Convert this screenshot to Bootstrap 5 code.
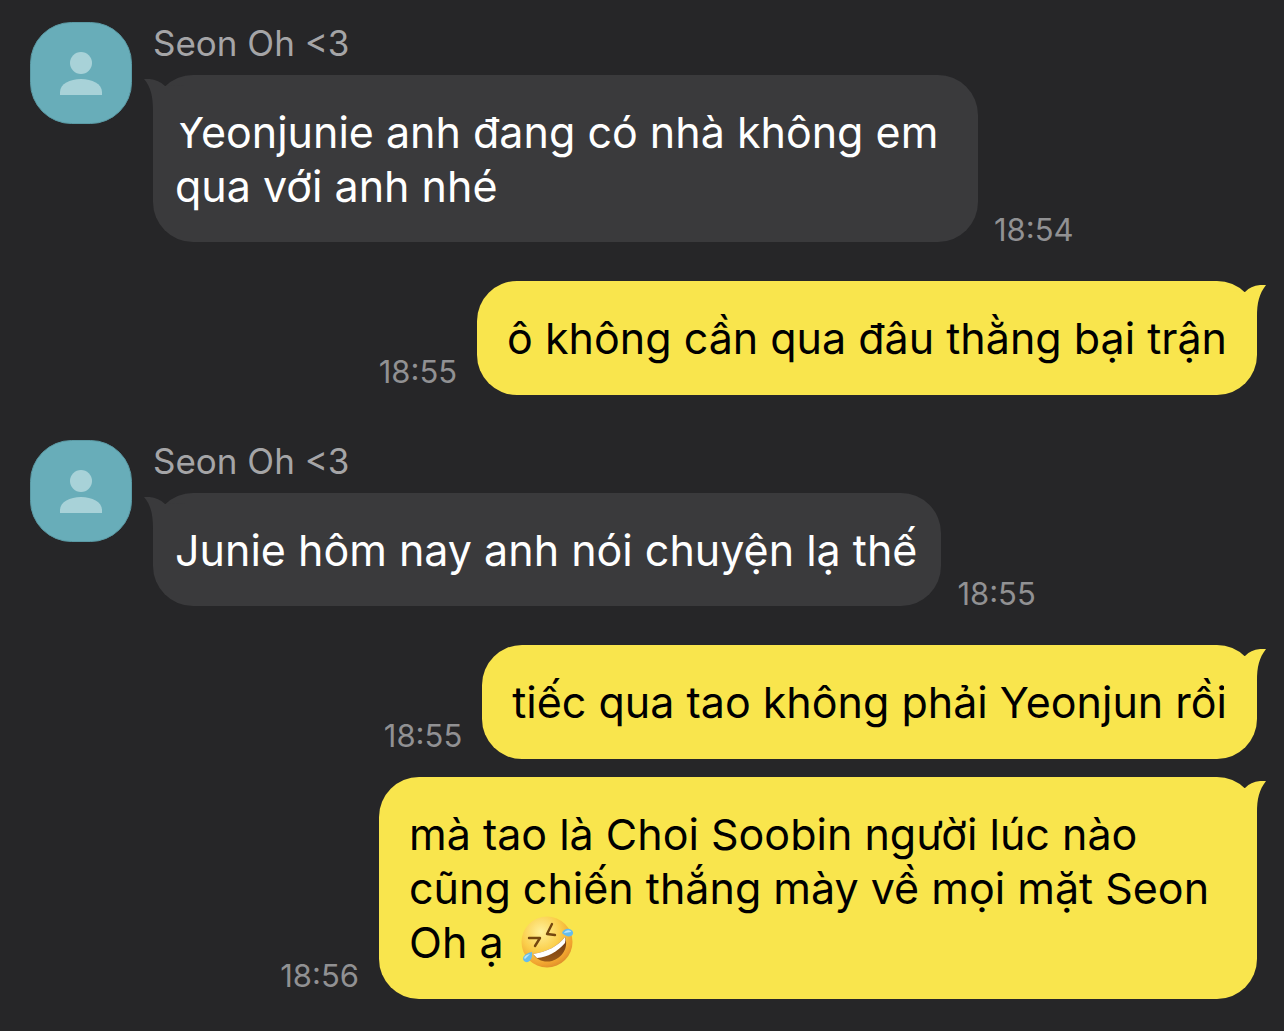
<!DOCTYPE html>
<html lang="vi">
<head>
<meta charset="utf-8">
<meta name="viewport" content="width=device-width, initial-scale=1">
<title>Seon Oh</title>
<link href="https://cdn.jsdelivr.net/npm/bootstrap@5.3.0/dist/css/bootstrap.min.css" rel="stylesheet">
<style>
body{background:#262628;font-family:Inter,"Liberation Sans",sans-serif}
.chat{padding:22px 27px 32px 30px}
.avatar{width:102px;height:102px}
.incoming{gap:21px;margin-bottom:39px}
.sender{font-size:35px;line-height:42px;color:#a5a5a7;margin-bottom:11px}
.bubble{position:relative;border-radius:40px;font-size:43px;line-height:54px;overflow-wrap:break-word}
.bubble-in{background:#3a3a3c;color:#fff;padding:30px 24px 29px 22px;max-width:825px}
.bubble-out{background:#f9e54d;color:#000;padding:30px;max-width:878px}
.tail{position:absolute;top:4px;width:42px;height:44px}
.bubble-in .tail{left:-9px;color:#3a3a3c}
.bubble-out .tail{right:-9px;color:#f9e54d}
.stamp{font-size:31px;color:#919193;white-space:nowrap}
.incoming .stamp{line-height:24px;margin-left:16px}
.outgoing .stamp{line-height:46px;margin-right:20px}
.outgoing{margin-bottom:18px}
.outgoing.turn-end{margin-bottom:45px}
.emoji{width:56px;height:54px;margin-left:4px;vertical-align:-11px}
</style>
<script src="https://cdn.jsdelivr.net/npm/bootstrap@5.3.0/dist/js/bootstrap.bundle.min.js"></script>
</head>
<body>
<svg class="d-none" aria-hidden="true">
<symbol id="person" viewBox="0 0 102 102"><rect x=".5" y=".5" width="101" height="101" rx="41" fill="#68adb9" stroke="#5b9aa5"/><circle cx="51" cy="41" r="11" fill="#a8d2d8"/><path d="M30 73V70C30 62 40 57 51 57S72 62 72 70V73Z" fill="#a8d2d8"/></symbol>
<symbol id="tail-left" viewBox="0 0 42 44"><path d="M0 0Q13-1 21 7L42 6V44H9V32C9 18 7 8 0 0Z" fill="currentColor"/></symbol>
<symbol id="tail-right" viewBox="0 0 42 44"><path d="M42 0Q28-1 21 7L0 6V44H33V32C33 18 35 9 42 0Z" fill="currentColor"/></symbol>
</svg>
<main class="chat d-flex flex-column">
  <article class="incoming d-flex align-items-start">
    <svg class="avatar flex-shrink-0" role="img" aria-label="Seon Oh"><use href="#person"/></svg>
    <div>
      <div class="sender">Seon Oh &lt;3</div>
      <div class="d-flex align-items-end">
        <div class="bubble bubble-in"><svg class="tail" aria-hidden="true"><use href="#tail-left"/></svg>Yeonjunie anh đang có nhà không em qua với anh nhé</div>
        <time class="stamp">18:54</time>
      </div>
    </div>
  </article>
  <article class="outgoing turn-end d-flex justify-content-end align-items-end">
    <time class="stamp">18:55</time>
    <div class="bubble bubble-out"><svg class="tail" aria-hidden="true"><use href="#tail-right"/></svg>ô không cần qua đâu thằng bại trận</div>
  </article>
  <article class="incoming d-flex align-items-start">
    <svg class="avatar flex-shrink-0" role="img" aria-label="Seon Oh"><use href="#person"/></svg>
    <div>
      <div class="sender">Seon Oh &lt;3</div>
      <div class="d-flex align-items-end">
        <div class="bubble bubble-in"><svg class="tail" aria-hidden="true"><use href="#tail-left"/></svg>Junie hôm nay anh nói chuyện lạ thế</div>
        <time class="stamp">18:55</time>
      </div>
    </div>
  </article>
  <article class="outgoing d-flex justify-content-end align-items-end">
    <time class="stamp">18:55</time>
    <div class="bubble bubble-out"><svg class="tail" aria-hidden="true"><use href="#tail-right"/></svg>tiếc qua tao không phải Yeonjun rồi</div>
  </article>
  <article class="outgoing mb-0 d-flex justify-content-end align-items-end">
    <time class="stamp">18:56</time>
    <div class="bubble bubble-out"><svg class="tail" aria-hidden="true"><use href="#tail-right"/></svg>mà tao là Choi Soobin người lúc nào cũng chiến thắng mày về mọi mặt Seon Oh ạ <svg class="emoji" viewBox="0 0 56 54" role="img" aria-label="Rolling on the floor laughing">
      <defs>
        <radialGradient id="face" cx=".38" cy=".3" r=".75"><stop offset="0" stop-color="#fff09a"/><stop offset=".5" stop-color="#fbcf4c"/><stop offset=".85" stop-color="#f0a22e"/><stop offset="1" stop-color="#dc8a2b"/></radialGradient>
        <linearGradient id="mouth" x1="0" y1="0" x2="0" y2="1"><stop offset="0" stop-color="#6b3510"/><stop offset="1" stop-color="#9a5a18"/></linearGradient>
      </defs>
      <circle cx="27" cy="27" r="25.500" fill="url(#face)"/>
      <path d="M9 23L20 23 15 31M32 9L27 19 35 20" fill="none" stroke="#75470f" stroke-width="2.400" stroke-linecap="round" stroke-linejoin="round"/>
      <path d="M13 39C27 37 38 31 45 22C49 33 42 43 32 46C24 48 17 45 13 39Z" fill="url(#mouth)"/>
      <path d="M13 39C27 37 38 31 45 22Q46 25 45 28C37 37 28 42 17 43Z" fill="#fff"/>
      <path d="M12 37C5 38 1 43 4 46S13 46 12 37Z" fill="#67bdec"/><path d="M10 39C5 40 3 43 5 44Z" fill="#b9e6fa"/>
      <path d="M42 18C44 12 52 13 53 17S48 24 42 18Z" fill="#67bdec"/><path d="M44 18C46 14 51 15 51 17Z" fill="#b9e6fa"/>
    </svg></div>
  </article>
</main>
</body>
</html>
